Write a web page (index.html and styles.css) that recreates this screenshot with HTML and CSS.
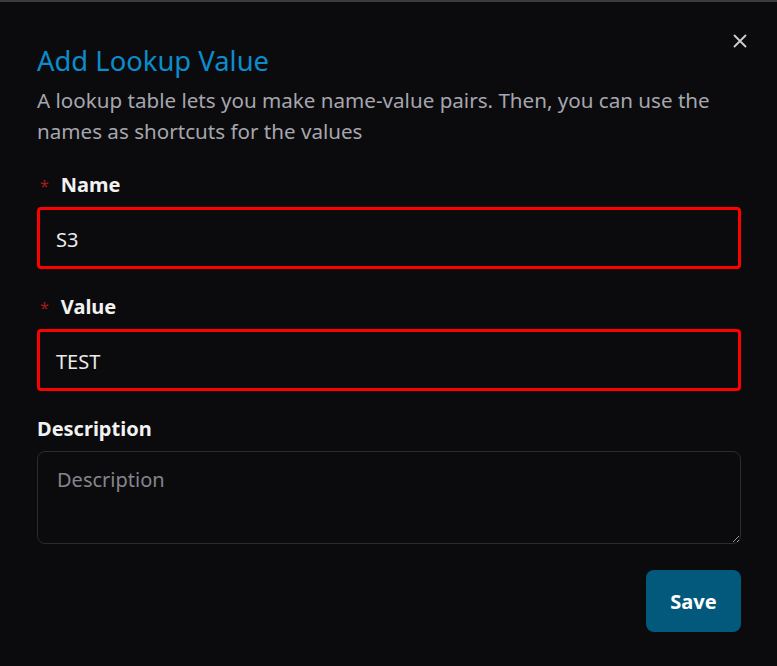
FILE: index.html
```html
<!DOCTYPE html>
<html lang="en">
<head>
<meta charset="utf-8">
<title>Add Lookup Value</title>
<link rel="stylesheet" href="styles.css">
</head>
<body>
<div class="dialog">
  <button class="close" aria-label="Close">
    <svg viewBox="0 0 16 16" width="16" height="16"><path d="M2.5 2.5 L13.5 13.5 M13.5 2.5 L2.5 13.5" stroke="#d0d0d4" stroke-width="1.8" stroke-linecap="round" fill="none"/></svg>
  </button>
  <h1 class="title">Add Lookup Value</h1>
  <p class="subtitle">A lookup table lets you make name-value pairs. Then, you can use the names as shortcuts for the values</p>

  <div class="field">
    <label class="label"><span class="req">*</span>Name</label>
    <div class="input invalid">S3</div>
  </div>
  <div class="field">
    <label class="label"><span class="req">*</span>Value</label>
    <div class="input invalid">TEST</div>
  </div>
  <div class="field">
    <label class="label">Description</label>
    <textarea class="textarea" placeholder="Description"></textarea>
  </div>
  <div class="actions">
    <button class="save">Save</button>
  </div>
</div>
</body>
</html>
```
FILE: styles.css
```css
html, body {
  margin: 0;
  padding: 0;
  background: #0b0b0d;
  color-scheme: dark;
}
body {
  font-family: "Noto Sans", "Open Sans", sans-serif;
  border-top: 2px solid #3c3c3e;
  height: 664px;
  overflow: hidden;
}
.dialog {
  position: relative;
  padding: 41px 36px 0 37px;
}
.close {
  position: absolute;
  top: 30px;
  right: 28px;
  width: 18px;
  height: 18px;
  padding: 0;
  border: 0;
  background: transparent;
  display: flex;
  align-items: center;
  justify-content: center;
}
.title {
  margin: 0;
  font-size: 27.4px;
  line-height: 36px;
  font-weight: 400;
  color: #0b8ccb;
}
.subtitle {
  margin: 6px 0 0;
  max-width: 690px;
  font-size: 20.6px;
  line-height: 31px;
  color: #a6a6ae;
}
.field {
  display: flex;
  flex-direction: column;
}
.field + .field {
  margin-top: 23px;
}
.subtitle + .field {
  margin-top: 23px;
}
.label {
  font-size: 20px;
  line-height: 30px;
  font-weight: 700;
  color: #f2f2f2;
  display: flex;
  align-items: center;
  margin-bottom: 7px;
}
.req {
  color: #a31b1b;
  font-size: 16px;
  font-weight: 400;
  margin: 0 12px 0 3px;
  position: relative;
  top: 1px;
}
.input {
  box-sizing: border-box;
  height: 62px;
  border-radius: 4px;
  padding: 3px 16px 0;
  display: flex;
  align-items: center;
  font-size: 20px;
  color: #ececec;
}
.input.invalid {
  border: 3px solid #ff0000;
}
.textarea {
  box-sizing: border-box;
  height: 93px;
  width: 100%;
  border: 1px solid #2c2c30;
  border-radius: 8px;
  background: #0b0b0d;
  padding: 14px 19px;
  font-family: inherit;
  font-size: 20px;
  line-height: 28px;
  color: #ececec;
  margin: 0;
  display: block;
}
.textarea::placeholder {
  color: #85858c;
}
.actions {
  display: flex;
  justify-content: flex-end;
  margin-top: 26px;
}
.save {
  width: 95px;
  height: 62px;
  border: 0;
  border-radius: 8px;
  background: #03597b;
  color: #ffffff;
  font-family: inherit;
  font-size: 20px;
  font-weight: 700;
}
```
